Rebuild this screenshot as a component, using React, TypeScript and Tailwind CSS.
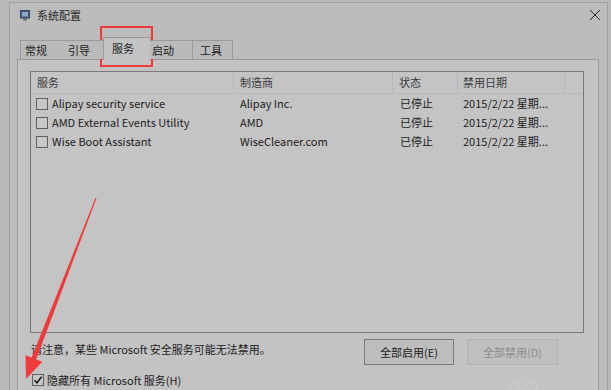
import React from "react";

const Box = ({ checked = false }: { checked?: boolean }) => (
  <span className="inline-flex items-center justify-center w-[12px] h-[12px] border border-[#5f5f5f] bg-[#c8c8c8] shrink-0">
    {checked && (
      <svg width="10" height="10" viewBox="0 0 10 10">
        <path d="M1.5 5.2 L4 7.8 L8.6 1.8" fill="none" stroke="#1a1a1a" strokeWidth="1.6" />
      </svg>
    )}
  </span>
);

const rows = [
  ["Alipay security service", "Alipay Inc.", "已停止", "2015/2/22 星期..."],
  ["AMD External Events Utility", "AMD", "已停止", "2015/2/22 星期..."],
  ["Wise Boot Assistant", "WiseCleaner.com", "已停止", "2015/2/22 星期..."],
];

export default function App() {
  return (
    <div className="relative w-[611px] h-[390px] overflow-hidden bg-[#b8b8b8] pl-[9px] pt-[2px] font-['Noto_Sans_CJK_SC',sans-serif] text-[11px] text-[#1c1c1c] leading-none">
      <div className="w-[599px] h-[400px] border-l border-t border-r border-[#a2a2a2] bg-[#bcbcbc] flex flex-col">
        {/* title bar */}
        <div className="h-[24px] flex items-center pl-[10px] pr-[6px]">
          <svg width="10" height="11" viewBox="0 0 10 11" className="shrink-0">
            <rect x="0.5" y="0.5" width="9" height="7.5" fill="#4a5a78" stroke="#3a4560" />
            <rect x="2" y="2" width="6" height="4.5" fill="#8fa8cc" />
            <rect x="3" y="8" width="4" height="2.5" fill="#6c6c6c" />
          </svg>
          <span className="ml-[7px] text-[#2a2a2a]">系统配置</span>
          <div className="flex-1" />
          <svg width="12" height="12" viewBox="0 0 12 12">
            <path d="M1 1 L11 11 M11 1 L1 11" stroke="#2e2e2e" strokeWidth="1" />
          </svg>
        </div>
        {/* body */}
        <div className="pl-[7px] pr-[8px] pt-[10px] flex flex-col">
          {/* tabs */}
          <div className="flex items-end h-[22px] ml-[3px] relative z-10">
            <div className="w-[43px] h-[19px] border-l border-t border-r border-[#9a9a9a] bg-[#bababa] flex items-center pl-[4px] pt-[1px]">常规</div>
            <div className="-ml-px w-[42px] h-[19px] border-t border-r border-[#9a9a9a] bg-[#bababa] flex items-center pl-[6px] pt-[1px]">引导</div>
            <div className="-ml-px w-[48px] h-[23px] border-l border-t border-r border-[#9a9a9a] bg-[#c3c3c3] flex items-center pl-[8px] pb-[2px] -mb-px">服务</div>
            <div className="-ml-px w-[43px] h-[19px] border-t border-r border-[#9a9a9a] bg-[#bababa] flex items-center pl-[2px] pt-[1px]">启动</div>
            <div className="-ml-px w-[41px] h-[19px] border-l border-t border-r border-[#9a9a9a] bg-[#bababa] flex items-center pl-[7px] pt-[1px]">工具</div>
          </div>
          {/* panel */}
          <div className="w-[582px] h-[340px] border border-[#9a9a9a] bg-[#c3c3c3] pl-[12px] pr-[14px] pt-[11px] flex flex-col">
            {/* list */}
            <div className="w-[554px] h-[262px] border border-[#7a7a7a] bg-[#c4c4c4] flex flex-col">
              <div className="h-[22px] border-b border-[#b9b9b9] flex text-[#3a3a3a]">
                <div className="w-[202px] border-r border-[#bebebe] pl-[6px] flex items-center">服务</div>
                <div className="w-[160px] border-r border-[#b8b8b8] pl-[7px] flex items-center">制造商</div>
                <div className="w-[65px] border-r border-[#b8b8b8] pl-[6px] flex items-center">状态</div>
                <div className="w-[107px] border-r border-[#b8b8b8] pl-[5px] flex items-center">禁用日期</div>
                <div className="flex-1" />
              </div>
              {rows.map((r) => (
                <div key={r[0]} className="h-[19px] flex items-center">
                  <div className="w-[202px] pl-[5px] flex items-center gap-[4px]">
                    <Box />
                    <span>{r[0]}</span>
                  </div>
                  <div className="w-[160px] pl-[7px]">{r[1]}</div>
                  <div className="w-[65px] pl-[7px]">{r[2]}</div>
                  <div className="w-[107px] pl-[5px]">{r[3]}</div>
                </div>
              ))}
            </div>
            {/* bottom */}
            <div className="flex items-start mt-[6px]">
              <div className="flex-1 pl-[1px] pt-[5px]">请注意，某些 Microsoft 安全服务可能无法禁用。</div>
              <div className="w-[90px] h-[26px] border border-[#7c7c7c] bg-[#bdbdbd] flex items-center justify-center">全部启用(E)</div>
              <div className="ml-[13px] w-[91px] h-[26px] border border-[#b2b2b2] bg-[#bfbfbf] flex items-center justify-center text-[#8e8e8e] mr-[26px]">全部禁用(D)</div>
            </div>
            <div className="mt-[9px] ml-[2px] flex items-center gap-[3px]">
              <Box checked />
              <span>隐藏所有 Microsoft 服务(H)</span>
            </div>
          </div>
        </div>
      </div>

      {/* red highlight around tab */}
      <div className="absolute left-[100px] top-[26px] w-[53px] h-[41px] border-2 border-[#ee3a3a]" />

      {/* watermark */}
      <svg className="absolute left-[505px] top-[377px]" width="34" height="16" viewBox="0 0 34 16">
        <circle cx="9" cy="9" r="5" fill="none" stroke="#cbcbcb" strokeWidth="1.2" />
        <circle cx="18" cy="7" r="5" fill="none" stroke="#cbcbcb" strokeWidth="1.2" />
        <circle cx="27" cy="9" r="5" fill="none" stroke="#cbcbcb" strokeWidth="1.2" />
      </svg>

      {/* red arrow */}
      <svg className="absolute left-0 top-0 pointer-events-none" width="611" height="390" viewBox="0 0 611 390">
        <polygon
          points="96.5,198.2 36.2,359.4 42.3,361.7 26,379 25.5,355.3 31.6,357.6 95.5,197.8"
          fill="#ef3b3b"
        />
      </svg>
    </div>
  );
}
